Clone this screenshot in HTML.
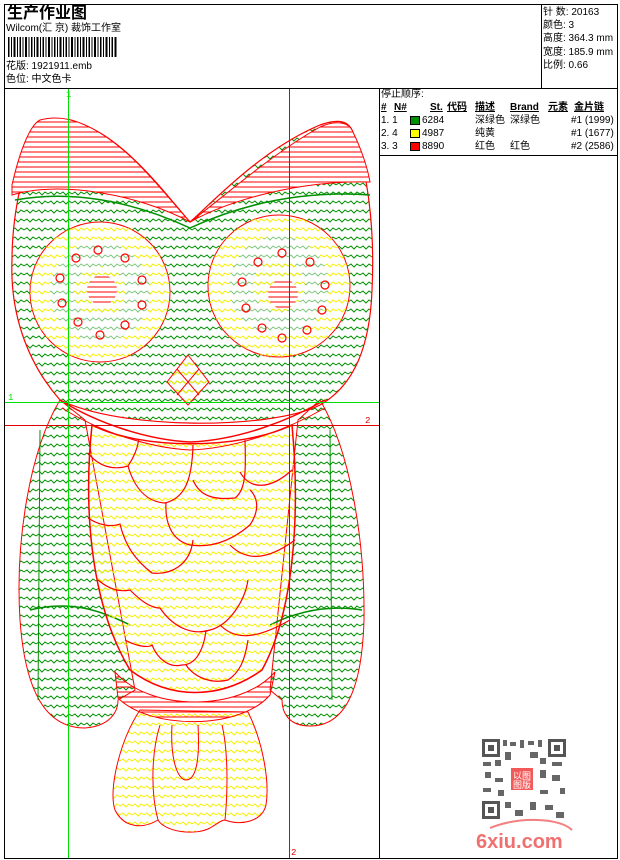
<!DOCTYPE html>
<html><head><meta charset="utf-8">
<style>
html,body{margin:0;padding:0;background:#fff;}
body{width:620px;height:860px;position:relative;overflow:hidden;font-family:"Liberation Sans","Noto Sans CJK SC",sans-serif;color:#000;}
.a{position:absolute;white-space:nowrap;line-height:12px;}
.f{font-size:10px;}
</style></head><body>
<svg class="a" style="left:0;top:0" width="620" height="860" xmlns="http://www.w3.org/2000/svg">
<defs>
<pattern id="zg" width="12" height="9" patternUnits="userSpaceOnUse">
<polyline points="0,5 3,3 6,6 9,3 12,5" fill="none" stroke="#008f00" stroke-width="1"/>
</pattern>
<pattern id="zy" width="12" height="9" patternUnits="userSpaceOnUse">
<polyline points="0,5 3,3 6,6 9,3 12,5" fill="none" stroke="#f5f000" stroke-width="1"/>
</pattern>
<pattern id="hr" width="10" height="5" patternUnits="userSpaceOnUse">
<line x1="0" y1="2" x2="10" y2="2" stroke="#f00" stroke-width="1"/>
</pattern>
<clipPath id="dc"><rect x="5" y="89" width="374" height="769"/></clipPath>
</defs>
<rect x="4.5" y="4.5" width="613" height="854" fill="none" stroke="#000"/>
<line x1="4" y1="88.5" x2="618" y2="88.5" stroke="#000"/>
<line x1="541.5" y1="4" x2="541.5" y2="88" stroke="#000"/>
<line x1="379.5" y1="88" x2="379.5" y2="858" stroke="#000"/>
<line x1="380" y1="155.5" x2="618" y2="155.5" stroke="#000"/>
<g fill="#000">
<rect x="8" y="37" width="1.5" height="20"/><rect x="11" y="37" width="1" height="20"/><rect x="13.5" y="37" width="2" height="20"/><rect x="17" y="37" width="1" height="20"/><rect x="19.5" y="37" width="1.5" height="20"/><rect x="22.5" y="37" width="1" height="20"/><rect x="25" y="37" width="2" height="20"/><rect x="28.5" y="37" width="1" height="20"/><rect x="31" y="37" width="1.5" height="20"/><rect x="34" y="37" width="1" height="20"/><rect x="36.5" y="37" width="2" height="20"/><rect x="40" y="37" width="1" height="20"/><rect x="42.5" y="37" width="1.5" height="20"/><rect x="45.5" y="37" width="1" height="20"/><rect x="48" y="37" width="2" height="20"/><rect x="51.5" y="37" width="1" height="20"/><rect x="54" y="37" width="1.5" height="20"/><rect x="57" y="37" width="1" height="20"/><rect x="59.5" y="37" width="2" height="20"/><rect x="63" y="37" width="1" height="20"/><rect x="65.5" y="37" width="1.5" height="20"/><rect x="68.5" y="37" width="1" height="20"/><rect x="71" y="37" width="2" height="20"/><rect x="74.5" y="37" width="1" height="20"/><rect x="77" y="37" width="1.5" height="20"/><rect x="80" y="37" width="1" height="20"/><rect x="82.5" y="37" width="2" height="20"/><rect x="86" y="37" width="1" height="20"/><rect x="88.5" y="37" width="1.5" height="20"/><rect x="91.5" y="37" width="1" height="20"/><rect x="94" y="37" width="2" height="20"/><rect x="97.5" y="37" width="1" height="20"/><rect x="100" y="37" width="1.5" height="20"/><rect x="103" y="37" width="1" height="20"/><rect x="105.5" y="37" width="2" height="20"/><rect x="109" y="37" width="1" height="20"/><rect x="111.5" y="37" width="1.5" height="20"/><rect x="114.5" y="37" width="2" height="20"/>
</g>
<rect x="410.5" y="116.5" width="9" height="8" fill="#008f00" stroke="#000"/>
<rect x="410.5" y="129.5" width="9" height="8" fill="#ffff00" stroke="#000"/>
<rect x="410.5" y="142.5" width="9" height="8" fill="#ff0000" stroke="#000"/>

<g clip-path="url(#dc)">
<path d="M60,400 C30,450 15,540 20,620 C25,690 45,728 85,728 C110,726 118,712 118,700 L135,690 L85,420 Z" fill="url(#zg)" stroke="#f00"/>
<path d="M320,400 C350,450 365,540 364,620 C362,690 345,726 310,726 C288,726 282,712 282,700 L270,690 L298,420 Z" fill="url(#zg)" stroke="#f00"/>
<path d="M30,610 C70,600 100,610 130,625 M270,625 C300,610 330,605 362,610" fill="none" stroke="#008f00" stroke-width="1.5"/>
<path d="M40,430 L38,700 M330,430 L332,700" fill="none" stroke="#008f00"/>
<path d="M140,710 C120,740 108,790 115,810 C125,830 145,828 158,820 C165,832 195,836 210,828 C220,822 222,820 225,820 C240,826 262,822 266,805 C270,780 262,740 248,712 Z" fill="url(#zy)" stroke="#f00"/>
<path d="M158,820 C150,790 152,750 160,725 M225,820 C228,790 228,750 222,725 M172,725 C170,760 178,780 186,780 C196,780 200,760 198,725" fill="none" stroke="#f00"/>
<path d="M115,672 C150,712 240,712 275,672 L270,695 C240,730 150,730 118,698 Z" fill="url(#hr)" stroke="#f00"/>
<path d="M92,425 C84,500 88,600 130,670 C170,700 220,700 262,670 C295,610 300,510 292,425 C240,450 140,450 92,425 Z" fill="url(#zy)" stroke="#f00" stroke-width="1.5"/>
<g fill="none" stroke="#f00" stroke-width="1.2">
<path d="M88,453 C100,468 115,470 128,466 C140,448 138,438 139,440"/>
<path d="M128,466 C135,490 148,502 165,503 C185,498 192,480 193,445"/>
<path d="M193,480 C200,497 215,500 235,498 C246,490 246,470 245,440"/>
<path d="M240,472 C250,490 270,490 292,470"/>
<path d="M88,518 C100,526 112,527 120,524 C125,545 135,560 152,573 C170,575 190,566 193,540"/>
<path d="M166,503 C165,520 170,540 190,545 C210,548 230,542 250,525 C265,502 250,490 250,490"/>
<path d="M230,545 C245,560 265,562 295,540"/>
<path d="M98,580 C110,590 120,592 130,590 C140,600 150,608 160,608 M160,608 C175,630 195,635 210,630 C230,625 245,600 248,580"/>
<path d="M220,625 C235,640 255,640 290,620"/>
<path d="M125,640 C140,648 150,647 152,645 C158,660 170,668 182,665 C200,665 205,640 206,630"/>
<path d="M186,665 C195,678 212,684 228,680 C240,672 245,660 248,640"/>
</g>
<path d="M60,400 C25,360 10,310 12,260 C12,210 25,160 40,125 C48,118 60,118 72,122 C120,130 170,200 190,222 C210,205 260,150 320,125 C340,118 348,122 352,130 C368,170 375,230 372,290 C370,345 355,385 320,405 C270,430 120,430 60,400 Z" fill="url(#zg)" stroke="#f00" stroke-width="1.2"/>
<path d="M12,185 C20,150 30,125 40,120 C55,116 70,118 85,125 C130,145 165,195 190,222 C140,195 60,180 12,195 Z" fill="#fff"/>
<path d="M12,185 C20,150 30,125 40,120 C55,116 70,118 85,125 C130,145 165,195 190,222 C140,195 60,180 12,195 Z" fill="url(#hr)" stroke="#f00"/>
<path d="M190,222 C220,200 270,155 320,127 C335,120 348,122 352,130 C362,150 368,170 370,182 C300,180 230,200 190,222 Z" fill="#fff"/>
<path d="M190,222 C220,200 270,155 320,127 C335,120 348,122 352,130 C362,150 368,170 370,182 C300,180 230,200 190,222 Z" fill="url(#hr)" stroke="#f00"/>
<path d="M15,200 C70,190 130,200 190,228 C240,205 300,190 370,195" fill="none" stroke="#008f00" stroke-width="1.5"/>
<path d="M60,400 C100,425 150,440 190,442 C240,440 290,420 325,400" fill="none" stroke="#f00" stroke-width="1.5"/>
<path d="M62,408 C100,432 150,448 190,450 C240,448 290,428 325,408" fill="none" stroke="#f00"/>
<circle cx="100" cy="292" r="70" fill="#fff" stroke="#f00"/>
<circle cx="100" cy="292" r="70" fill="url(#zy)"/>
<circle cx="100" cy="292" r="50" fill="#fff"/>
<circle cx="100" cy="292" r="50" fill="url(#zg)" opacity="0.5"/>
<circle cx="100" cy="292" r="26" fill="url(#zy)"/>
<circle cx="102" cy="290" r="15" fill="#fff"/>
<circle cx="102" cy="290" r="15" fill="url(#hr)"/>
<circle cx="279" cy="286" r="71" fill="#fff" stroke="#f00"/>
<circle cx="279" cy="286" r="71" fill="url(#zy)"/>
<circle cx="279" cy="286" r="50" fill="#fff"/>
<circle cx="279" cy="286" r="50" fill="url(#zg)" opacity="0.5"/>
<circle cx="279" cy="286" r="26" fill="url(#zy)"/>
<circle cx="283" cy="294" r="15" fill="#fff"/>
<circle cx="283" cy="294" r="15" fill="url(#hr)"/>
<g fill="none" stroke="#f00" stroke-width="1.2">
<circle cx="98" cy="250" r="4"/><circle cx="125" cy="258" r="4"/><circle cx="142" cy="280" r="4"/><circle cx="142" cy="305" r="4"/><circle cx="125" cy="325" r="4"/><circle cx="100" cy="335" r="4"/><circle cx="78" cy="322" r="4"/><circle cx="62" cy="303" r="4"/><circle cx="60" cy="278" r="4"/><circle cx="76" cy="258" r="4"/>
<circle cx="282" cy="253" r="4"/><circle cx="310" cy="262" r="4"/><circle cx="325" cy="285" r="4"/><circle cx="322" cy="310" r="4"/><circle cx="307" cy="330" r="4"/><circle cx="282" cy="338" r="4"/><circle cx="262" cy="328" r="4"/><circle cx="246" cy="308" r="4"/><circle cx="242" cy="282" r="4"/><circle cx="258" cy="262" r="4"/>
</g>
<path d="M188,355 L209,382 L188,405 L167,382 Z" fill="url(#zy)" stroke="#f00"/>
<path d="M177,369 L199,395 M199,369 L177,395" stroke="#f00"/>
</g>
<line x1="68.5" y1="89" x2="68.5" y2="858" stroke="#00e000"/>
<line x1="289.5" y1="89" x2="289.5" y2="858" stroke="#e00000"/>
<line x1="5" y1="402.5" x2="379" y2="402.5" stroke="#00e000"/>
<line x1="5" y1="425.5" x2="379" y2="425.5" stroke="#e00000"/>
<text x="66" y="97" font-size="9" fill="#00e000" font-family="Liberation Mono,monospace">1</text>
<text x="8" y="400" font-size="9" fill="#00e000" font-family="Liberation Mono,monospace">1</text>
<text x="365" y="423" font-size="9" fill="#e00000" font-family="Liberation Mono,monospace">2</text>
<text x="291" y="855" font-size="9" fill="#e00000" font-family="Liberation Mono,monospace">2</text>
<g fill="#555">
<rect x="482" y="739" width="18" height="18"/><rect x="548" y="739" width="18" height="18"/><rect x="482" y="801" width="18" height="18"/>
</g>
<g fill="#fff"><rect x="485" y="742" width="12" height="12"/><rect x="551" y="742" width="12" height="12"/><rect x="485" y="804" width="12" height="12"/></g>
<g fill="#555"><rect x="488" y="745" width="6" height="6"/><rect x="554" y="745" width="6" height="6"/><rect x="488" y="807" width="6" height="6"/></g>
<g fill="#666">
<rect x="503" y="740" width="4" height="6"/><rect x="510" y="742" width="6" height="4"/><rect x="520" y="740" width="4" height="8"/><rect x="528" y="741" width="6" height="4"/><rect x="538" y="740" width="4" height="7"/>
<rect x="483" y="762" width="8" height="4"/><rect x="495" y="760" width="6" height="6"/><rect x="505" y="752" width="6" height="8"/><rect x="530" y="752" width="8" height="6"/><rect x="540" y="758" width="6" height="6"/><rect x="552" y="762" width="10" height="4"/>
<rect x="485" y="772" width="6" height="6"/><rect x="495" y="778" width="8" height="4"/><rect x="540" y="770" width="6" height="8"/><rect x="552" y="775" width="8" height="6"/><rect x="560" y="788" width="5" height="6"/>
<rect x="483" y="788" width="8" height="4"/><rect x="498" y="790" width="6" height="6"/><rect x="540" y="790" width="8" height="4"/><rect x="505" y="802" width="6" height="6"/><rect x="515" y="810" width="8" height="6"/><rect x="530" y="802" width="6" height="8"/><rect x="545" y="805" width="8" height="5"/><rect x="556" y="812" width="8" height="6"/>
</g>
<rect x="511" y="768" width="22" height="22" fill="#f25a5a"/>
<text x="513" y="779" font-size="9" fill="#fff" font-family="Noto Sans CJK SC,sans-serif">以图</text>
<text x="513" y="788" font-size="9" fill="#fff" font-family="Noto Sans CJK SC,sans-serif">图版</text>
<path d="M490,828 C520,816 560,818 572,830" fill="none" stroke="#f28080" stroke-width="2"/>
<text x="476" y="848" font-size="20" font-weight="bold" fill="#f07070" font-family="Liberation Sans,sans-serif">6xiu.com</text>
</svg>

<div class="a" style="left:7px;top:5px;font-size:16px;line-height:18px;font-weight:bold;">生产作业图</div>
<div class="a f" style="left:6px;top:23px;">Wilcom(汇 京) 裁饰工作室</div>
<div class="a f" style="left:6px;top:61px;">花版: 1921911.emb</div>
<div class="a f" style="left:6px;top:74px;">色位: 中文色卡</div>
<div class="a f" style="left:543px;top:6px;line-height:13.2px;">针 数: 20163<br>颜色: 3<br>高度: 364.3 mm<br>宽度: 185.9 mm<br>比例: 0.66</div>
<div class="a f" style="left:381px;top:89px;">停止顺序:</div>
<div class="a f" style="left:381px;top:102px;font-weight:bold;text-decoration:underline;">#</div>
<div class="a f" style="left:394px;top:102px;font-weight:bold;text-decoration:underline;">N#</div>
<div class="a f" style="left:430px;top:102px;font-weight:bold;text-decoration:underline;">St.</div>
<div class="a f" style="left:447px;top:102px;font-weight:bold;text-decoration:underline;">代码</div>
<div class="a f" style="left:475px;top:102px;font-weight:bold;text-decoration:underline;">描述</div>
<div class="a f" style="left:510px;top:102px;font-weight:bold;text-decoration:underline;">Brand</div>
<div class="a f" style="left:548px;top:102px;font-weight:bold;text-decoration:underline;">元素</div>
<div class="a f" style="left:574px;top:102px;font-weight:bold;text-decoration:underline;">金片链</div>
<div class="a f" style="left:381px;top:115px;">1. 1</div><div class="a f" style="left:422px;top:115px;">6284</div><div class="a f" style="left:475px;top:115px;">深绿色</div><div class="a f" style="left:510px;top:115px;">深绿色</div><div class="a f" style="left:571px;top:115px;">#1 (1999)</div>
<div class="a f" style="left:381px;top:128px;">2. 4</div><div class="a f" style="left:422px;top:128px;">4987</div><div class="a f" style="left:475px;top:128px;">纯黄</div><div class="a f" style="left:571px;top:128px;">#1 (1677)</div>
<div class="a f" style="left:381px;top:141px;">3. 3</div><div class="a f" style="left:422px;top:141px;">8890</div><div class="a f" style="left:475px;top:141px;">红色</div><div class="a f" style="left:510px;top:141px;">红色</div><div class="a f" style="left:571px;top:141px;">#2 (2586)</div>
</body></html>
